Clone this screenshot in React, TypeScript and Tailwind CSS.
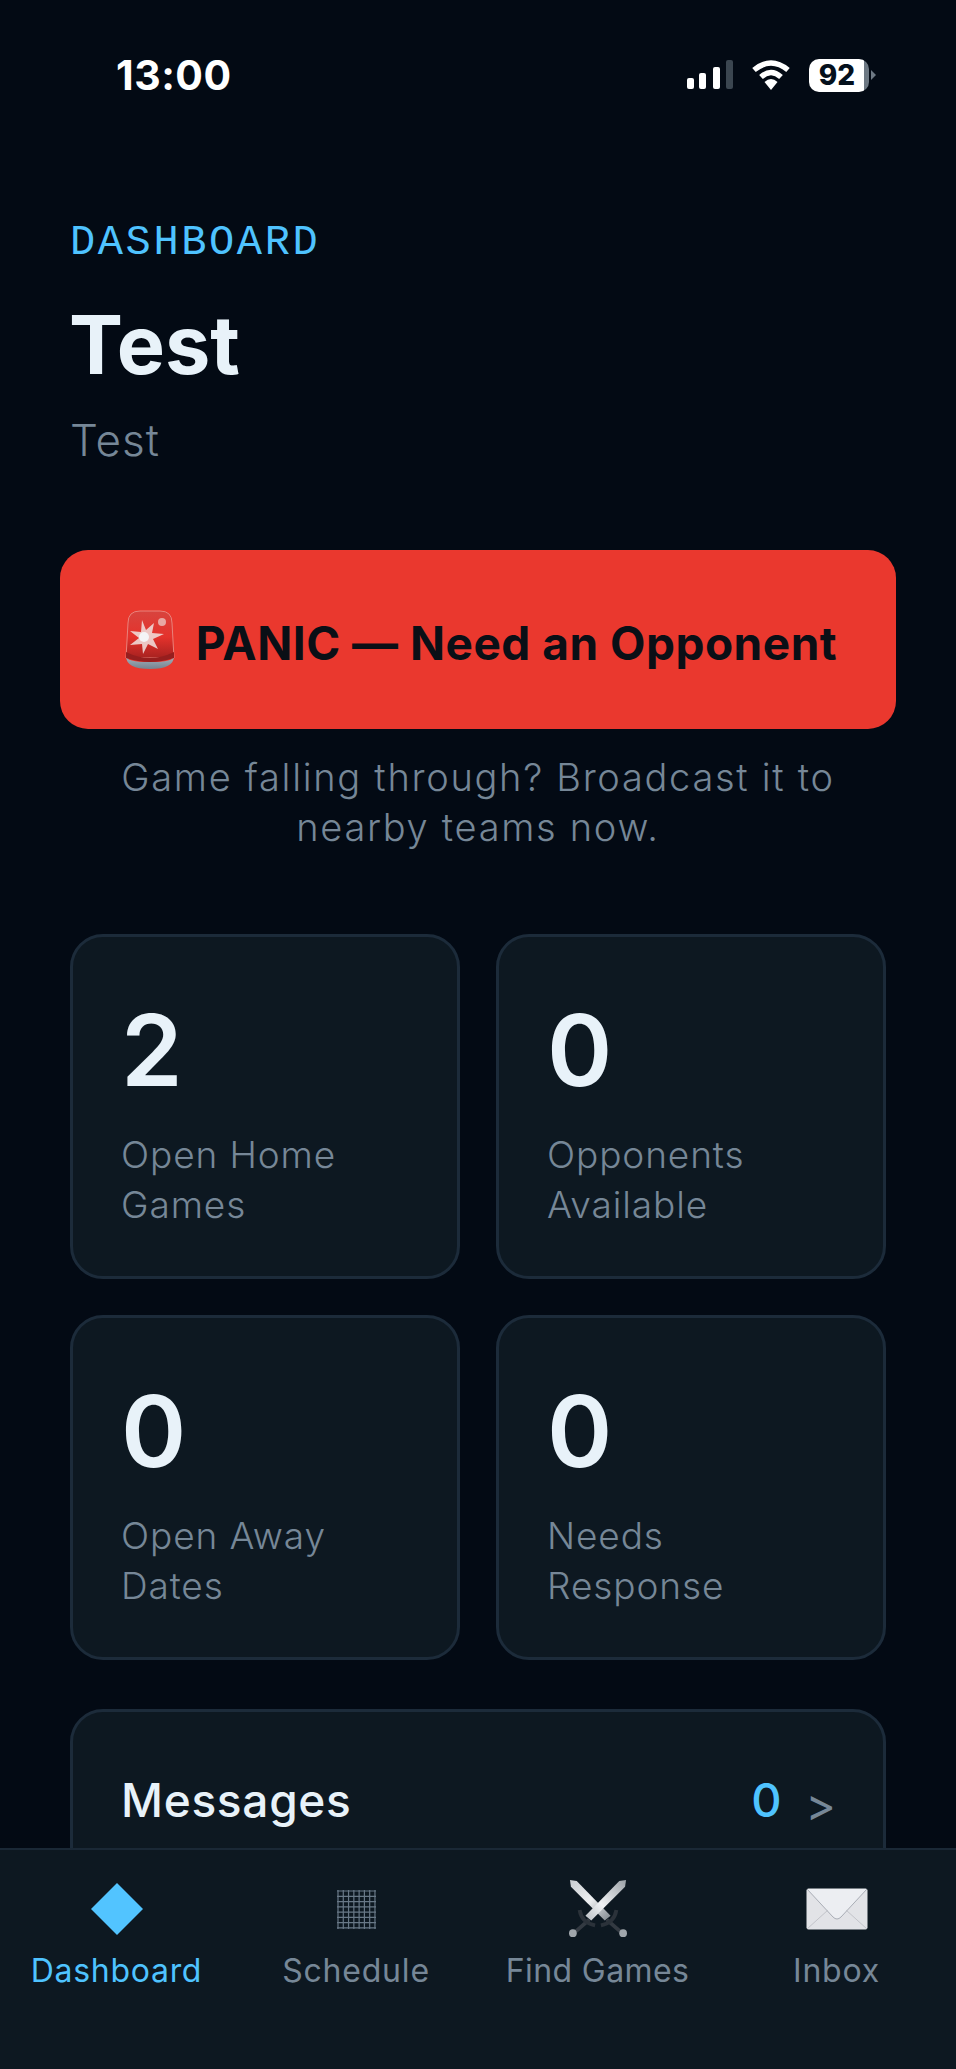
import React from "react";

const Siren = () => (
  <svg width="50" height="60" viewBox="0 0 50 60" className="shrink-0">
    <defs>
      <linearGradient id="dome" x1="0" y1="0" x2="0" y2="1">
        <stop offset="0" stopColor="#d8443e" />
        <stop offset="0.55" stopColor="#e5322c" />
        <stop offset="1" stopColor="#a82220" />
      </linearGradient>
      <linearGradient id="base" x1="0" y1="0" x2="0" y2="1">
        <stop offset="0" stopColor="#a7b4bf" />
        <stop offset="1" stopColor="#75838f" />
      </linearGradient>
    </defs>
    <path d="M3 13 Q3 1 15 1 H35 Q47 1 47 13 L49 48 H1 Z" fill="url(#dome)" stroke="#e9827b" strokeWidth="1" />
    <path d="M1 46 Q1 59 25 59 Q49 59 49 46 Q49 52 25 52 Q1 52 1 46 Z" fill="url(#base)" />
    <path d="M1 42 Q25 54 49 42 L49 48 Q25 56 1 48 Z" fill="#961e1e" />
    <path d="M17 10 L21 20 L29 13 L27 23 L39 24 L28 29 L33 39 L23 34 L18 44 L17 34 L5 35 L14 28 L5 21 L16 22 Z" fill="#eed8d6" opacity="0.9" />
    <circle cx="19" cy="27" r="5" fill="#f4f4f6" />
    <circle cx="37" cy="12" r="4" fill="#e8a8a4" />
  </svg>
);

const Swords = () => (
  <svg width="60" height="58" viewBox="0 0 60 60" className="block">
    <defs>
      <linearGradient id="bl" x1="0" y1="0" x2="1" y2="1">
        <stop offset="0" stopColor="#c8ccd0" />
        <stop offset="0.5" stopColor="#eef0f2" />
        <stop offset="1" stopColor="#7d848b" />
      </linearGradient>
      <linearGradient id="br" x1="1" y1="0" x2="0" y2="1">
        <stop offset="0" stopColor="#9aa0a6" />
        <stop offset="0.6" stopColor="#f0f2f4" />
        <stop offset="1" stopColor="#b9bec3" />
      </linearGradient>
    </defs>
    <path d="M1 0 L8 1 L43 37 L37 42 L2 7 Z" fill="url(#bl)" />
    <path d="M5 55 L21 41" stroke="#333a42" strokeWidth="4" fill="none" />
    <path d="M55 55 L39 41" stroke="#333a42" strokeWidth="4" fill="none" />
    <path d="M11 31 Q13 44 27 47" stroke="#2b323a" strokeWidth="4" fill="none" />
    <path d="M49 31 Q47 44 33 47" stroke="#2b323a" strokeWidth="4" fill="none" />
    <path d="M59 0 L52 1 L17 37 L23 42 L58 7 Z" fill="url(#br)" />
    <circle cx="4" cy="55" r="4" fill="#a0a6ac" />
    <circle cx="56" cy="55" r="4" fill="#a0a6ac" />
  </svg>
);

const Envelope = () => (
  <svg width="62" height="42" viewBox="0 0 62 42" className="block">
    <rect x="0.5" y="0.5" width="61" height="41" rx="2" fill="#e2e3e7" />
    <path d="M1 1 L27 29 Q31 33 35 29 L61 1 Z" fill="#eceef2" />
    <path d="M1 1 L27 29 Q31 33 35 29 L61 1" fill="none" stroke="#a9adb6" strokeWidth="1" />
    <path d="M1 41 L22 22 M61 41 L40 22" stroke="#c2c4ca" strokeWidth="1" />
  </svg>
);

const GridIcon = () => {
  const lines = [0, 1, 2, 3, 4, 5, 6, 7];
  return (
    <svg width="39" height="39" viewBox="0 0 39 39" className="block">
      {lines.map((i) => (
        <React.Fragment key={i}>
          <line x1={1 + i * 5.28} y1="0" x2={1 + i * 5.28} y2="39" stroke="#687887" strokeWidth="1.2" />
          <line y1={1 + i * 5.28} x1="0" y2={1 + i * 5.28} x2="39" stroke="#687887" strokeWidth="1.2" />
        </React.Fragment>
      ))}
    </svg>
  );
};

const Diamond = () => (
  <svg width="52" height="52" viewBox="0 0 52 52" className="block">
    <path d="M26 0 L52 26 L26 52 L0 26 Z" fill="#52c4ff" />
  </svg>
);

const Signal = () => (
  <svg width="46" height="30" viewBox="0 0 46 30" className="block">
    <rect x="0" y="18" width="7" height="11" rx="2" fill="#fff" />
    <rect x="12" y="13" width="7" height="16" rx="2" fill="#fff" />
    <rect x="26" y="7" width="7" height="22" rx="2" fill="#fff" />
    <rect x="39" y="0" width="7" height="29" rx="2" fill="#3b4650" />
  </svg>
);

const Wifi = () => (
  <svg width="40" height="30" viewBox="0 0 40 30" className="block">
    <path d="M3 10 Q20 -4 37 10" fill="none" stroke="#fff" strokeWidth="5.5" strokeLinecap="butt" />
    <path d="M10 17 Q20 8 30 17" fill="none" stroke="#fff" strokeWidth="5.5" />
    <path d="M13.5 22 Q20 16 26.5 22 L20 30 Z" fill="#fff" />
  </svg>
);

const Battery = () => (
  <div className="flex items-center">
    <div className="flex h-[33px] w-[60px] items-center justify-center rounded-[10px] bg-[linear-gradient(90deg,#ffffff_0%,#ffffff_91%,#6d7883_91%,#6d7883_100%)] pr-[4px] font-['Inter',sans-serif] text-[28px] font-extrabold leading-none text-[#04101c]">
      92
    </div>
    <svg width="5" height="10" viewBox="0 0 5 10" className="ml-[2px] block">
      <path d="M0 0 L5 5 L0 10 Z" fill="#6d7883" />
    </svg>
  </div>
);

const Stat = ({ value, line1, line2 }: { value: string; line1: string; line2: string }) => (
  <div className="rounded-[33px] border-[3px] border-[#1c2b3a] bg-[#0d1821] pb-[46px] pl-[48px] pt-[58px]">
    <div className="text-[99px] font-semibold leading-[110px] text-[#e8f2f9]">{value}</div>
    <div className="mt-[25px] text-[37px] font-light leading-[50px] tracking-[0.9px] text-[#768797]">
      {line1}
      <br />
      {line2}
    </div>
  </div>
);

export default function App() {
  return (
    <div className="flex h-[2069px] w-[956px] flex-col overflow-hidden bg-[#030a14] font-['Inter',sans-serif]">
      <div className="flex min-h-0 flex-1 flex-col overflow-hidden">
        <div className="mt-[45px] flex h-[60px] shrink-0 items-center justify-between pl-[116px] pr-[80px]">
          <span className="font-['Inter',sans-serif] text-[41px] font-bold leading-none tracking-[0.5px] text-white">13:00</span>
          <div className="flex items-center gap-[18px]">
            <Signal />
            <Wifi />
            <Battery />
          </div>
        </div>
        <div className="px-[70px] pt-[118px]">
          <div className="font-['Liberation_Mono',monospace] text-[42px] leading-[40px] tracking-[2.6px] text-[#4fc3ff]">DASHBOARD</div>
          <h1 className="ml-[-1px] mt-[37px] text-[81px] font-bold leading-[90px] text-[#e8f2f9]">Test</h1>
          <p className="mt-[25px] text-[44px] font-light leading-[50px] tracking-[1px] text-[#768797]">Test</p>
          <div className="-mx-[10px] mt-[85px] flex h-[179px] items-center justify-center gap-[21px] rounded-[28px] bg-[#ea382e] pl-[6px]">
            <Siren />
            <span className="pt-[7px] text-[46px] font-bold leading-none tracking-[0.5px] text-[#0a0f16]">PANIC — Need an Opponent</span>
          </div>
          <p className="mt-[23px] text-center text-[38px] font-light leading-[50px] tracking-[1.7px] text-[#768797]">
            Game falling through? Broadcast it to
            <br />
            nearby teams now.
          </p>
          <div className="mt-[82px] grid grid-cols-2 gap-[36px]">
            <Stat value="2" line1="Open Home" line2="Games" />
            <Stat value="0" line1="Opponents" line2="Available" />
            <Stat value="0" line1="Open Away" line2="Dates" />
            <Stat value="0" line1="Needs" line2="Response" />
          </div>
          <div className="mt-[49px] rounded-[33px] border-[3px] border-[#1c2b3a] bg-[#0d1821] pb-[150px] pl-[48px] pr-[47px] pt-[56px]">
            <div className="flex items-center justify-between">
              <span className="text-[46px] font-medium leading-[56px] tracking-[0.7px] text-[#e8f2f9]">Messages</span>
              <div className="flex items-center gap-[24px]">
                <span className="text-[47px] font-medium leading-[56px] text-[#4fc3ff]">0</span>
                <span className="mt-[8px] text-[46px] font-normal leading-[56px] text-[#768797]">&gt;</span>
              </div>
            </div>
          </div>
        </div>
      </div>
      <nav className="grid h-[221px] shrink-0 grid-cols-4 border-t-[2px] border-[#1a2836] bg-[#0d1821] pt-[28px]">
        <div className="flex flex-col items-center pr-[6px]">
          <div className="flex h-[62px] items-center justify-center"><Diamond /></div>
          <span className="mt-[11px] text-[32px] leading-[40px] tracking-[0.7px] text-[#4fc3ff]">Dashboard</span>
        </div>
        <div className="flex flex-col items-center pr-[5px]">
          <div className="flex h-[62px] items-center justify-center"><GridIcon /></div>
          <span className="mt-[11px] text-[32px] leading-[40px] tracking-[0.8px] text-[#768797]">Schedule</span>
        </div>
        <div className="flex flex-col items-center">
          <div className="flex h-[62px] items-center justify-center"><Swords /></div>
          <span className="mt-[11px] text-[32px] leading-[40px] tracking-[0.4px] text-[#768797]">Find Games</span>
        </div>
        <div className="flex flex-col items-center">
          <div className="flex h-[62px] items-center justify-center"><Envelope /></div>
          <span className="mt-[11px] text-[32px] leading-[40px] tracking-[0.8px] text-[#768797]">Inbox</span>
        </div>
      </nav>
    </div>
  );
}
